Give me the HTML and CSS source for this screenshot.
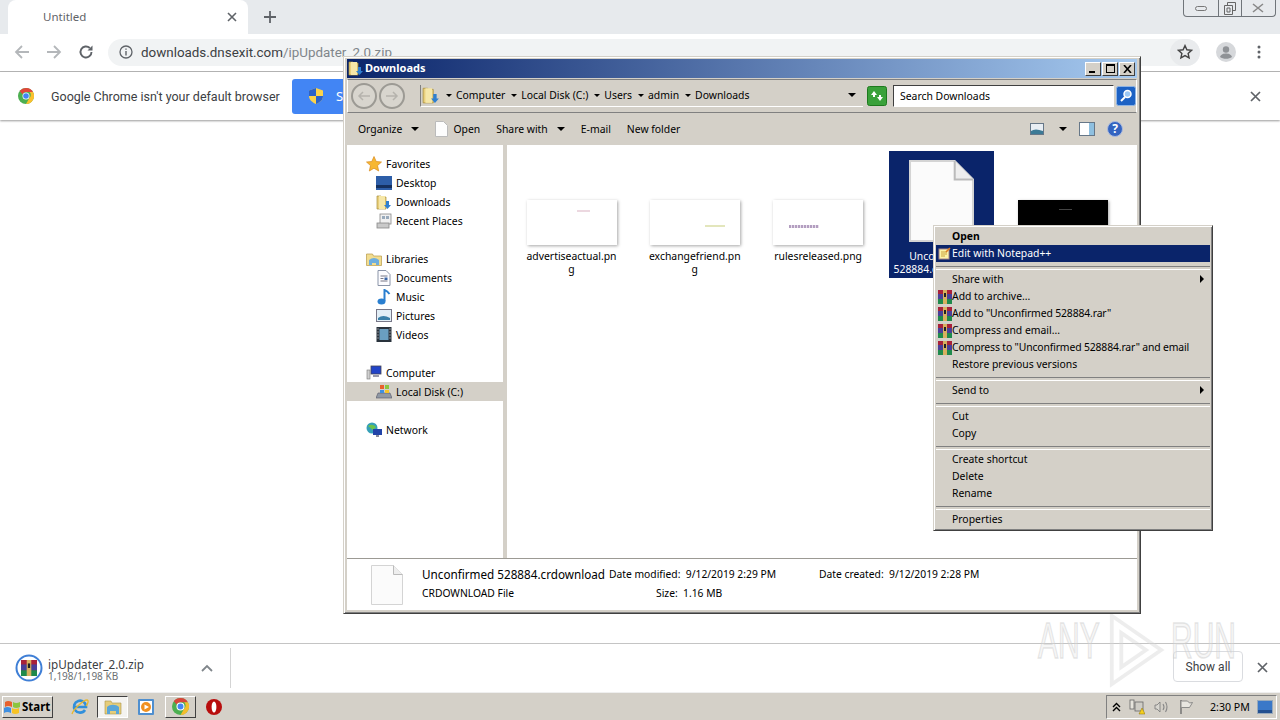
FILE: index.html
```html
<!DOCTYPE html>
<html lang="en">
<head>
    <meta charset="UTF-8">
    <title>Downloads</title>
    <link rel="stylesheet" href="styles.css">
</head>
<body>
    <svg class="defs" width="0" height="0">
        <symbol id="rar" viewBox="0 0 14 14">
            <rect width="14" height="14" fill="#7a2b6b"/>
            <rect y="0" width="14" height="4" fill="#a8213a"/>
            <rect y="4" width="14" height="5" fill="#4a3f98"/>
            <rect y="9" width="14" height="5" fill="#1f8a4c"/>
            <rect x="5" y="0" width="4" height="14" fill="#d8b060"/>
            <rect x="6" y="3" width="2" height="4" fill="#222"/>
        </symbol>
        <symbol id="folder" viewBox="0 0 16 16">
            <path d="M1 2h4l1 1h4v12H1z" fill="#e9cf7c" stroke="#a98f3e" stroke-width=".7"/>
            <path d="M3 2h6v13H3z" fill="#f6e7a8"/>
            <path d="M10 7h3v4h2l-3.500 4L8 11h2z" fill="#2f7fd0"/>
        </symbol>
        <symbol id="blankdoc" viewBox="0 0 32 40">
            <path d="M.5.5h22l9 9v30H.5z" fill="#fbfbfb" stroke="#d4d4d4"/>
            <path d="M22.500.5v9h9" fill="#eee" stroke="#bbb"/>
        </symbol>
    </svg>

    <div class="tabstrip">
        <div class="tab">
            <span class="tab-title">Untitled</span>
            <svg class="tab-close" width="10" height="10" viewBox="0 0 10 10"><path d="M1 1l8 8M9 1l-8 8" stroke="#5f6368" stroke-width="1.6"/></svg>
        </div>
        <svg class="new-tab" width="14" height="14" viewBox="0 0 14 14"><path d="M7 1v12M1 7h12" stroke="#5f6368" stroke-width="1.8"/></svg>
        <div class="win-controls">
            <span class="win-ctl"><svg width="12" height="8" viewBox="0 0 12 8"><rect x=".5" y="2.5" width="11" height="4" rx="2" fill="none" stroke="#777"/></svg></span>
            <span class="win-ctl win-ctl-mid"><svg width="12" height="13" viewBox="0 0 12 13"><path d="M3.500 3V.5h8v8H9M.5 3.500h8v9h-8zM3 6h3v4H3z" fill="none" stroke="#666"/></svg></span>
            <span class="win-ctl"><svg width="12" height="10" viewBox="0 0 12 10"><path d="M1 1l10 8M11 1L1 9" stroke="#888" stroke-width="1.6"/></svg></span>
        </div>
    </div>

    <div class="toolbar">
        <svg class="nav-btn" width="16" height="16" viewBox="0 0 16 16"><path d="M15 8H2M8 2L2 8l6 6" fill="none" stroke="#b4b7ba" stroke-width="1.8"/></svg>
        <svg class="nav-btn" width="16" height="16" viewBox="0 0 16 16"><path d="M1 8h13M8 2l6 6-6 6" fill="none" stroke="#b4b7ba" stroke-width="1.8"/></svg>
        <svg class="nav-btn" width="16" height="16" viewBox="0 0 16 16"><path d="M13.500 8A5.500 5.500 0 1 1 11.800 4" fill="none" stroke="#5f6368" stroke-width="1.9"/><path d="M14.500 1.500v5h-5z" fill="#5f6368"/></svg>
        <div class="omnibox">
            <svg width="14" height="14" viewBox="0 0 14 14"><circle cx="7" cy="7" r="6" fill="none" stroke="#5f6368" stroke-width="1.3"/><path d="M7 6v4.400M7 3.400v1.400" stroke="#5f6368" stroke-width="1.4"/></svg>
            <span class="url">downloads.dnsexit.com<span class="url-path">/ipUpdater_2.0.zip</span></span>
            <span class="star-btn"><svg width="16" height="16" viewBox="0 0 16 16"><path d="M8 1.600l1.900 4.200 4.600.5-3.400 3.100 1 4.500L8 11.600l-4.100 2.300 1-4.500-3.400-3.100 4.600-.5z" fill="none" stroke="#444" stroke-width="1.4"/></svg></span>
        </div>
        <svg class="avatar" width="20" height="20" viewBox="0 0 20 20"><circle cx="10" cy="10" r="10" fill="#d6d8db"/><circle cx="10" cy="7.500" r="3.200" fill="#8f9296"/><path d="M4 15c1-3 3.500-3.600 6-3.600s5 .6 6 3.600c-3 2.400-9 2.400-12 0z" fill="#8f9296"/></svg>
        <svg class="dots" width="4" height="14" viewBox="0 0 4 14"><circle cx="2" cy="2" r="1.500" fill="#5f6368"/><circle cx="2" cy="7" r="1.500" fill="#5f6368"/><circle cx="2" cy="12" r="1.500" fill="#5f6368"/></svg>
    </div>

    <div class="infobar">
        <svg class="chrome-logo" width="16" height="16" viewBox="0 0 16 16">
            <circle cx="8" cy="8" r="8" fill="#4caf50"/>
            <path d="M8 0a8 8 0 0 1 7 4H8a4 4 0 0 0-3.600 2.200L1.700 3A8 8 0 0 1 8 0z" fill="#e2463a"/>
            <path d="M15 4a8 8 0 0 1-7 12l3.400-6A4 4 0 0 0 11.500 4z" fill="#fbc02d"/>
            <circle cx="8" cy="8" r="3.500" fill="#fff"/><circle cx="8" cy="8" r="2.800" fill="#4285f4"/>
        </svg>
        <span class="infobar-text">Google Chrome isn't your default browser</span>
        <div class="set-default">
            <svg width="14" height="16" viewBox="0 0 14 16"><path d="M7 0l7 2.500V8c0 4-3.500 6.500-7 8-3.500-1.500-7-4-7-8V2.500z" fill="#fbd34a"/><path d="M7 0v8H0V2.500zM7 8h7c0 4-3.500 6.500-7 8z" fill="#2a62c9"/></svg>
            <span>Set as default</span>
        </div>
        <svg class="infobar-close" width="11" height="11" viewBox="0 0 11 11"><path d="M1 1l9 9M10 1l-9 9" stroke="#5f6368" stroke-width="1.700"/></svg>
    </div>

    <div class="page"></div>

    <div class="downloadbar">
        <svg class="dl-icon" width="28" height="28" viewBox="0 0 28 28">
            <circle cx="14" cy="14" r="12.500" fill="#fff" stroke="#3f7fd6" stroke-width="2"/>
            <use href="#rar" x="6" y="6" width="16" height="16"/>
        </svg>
        <div class="dl-text">
            <span class="dl-name">ipUpdater_2.0.zip</span>
            <span class="dl-size">1,198/1,198 KB</span>
        </div>
        <svg class="dl-chevron" width="12" height="8" viewBox="0 0 12 8"><path d="M1 7l5-5 5 5" fill="none" stroke="#80868b" stroke-width="1.800"/></svg>
        <div class="dl-sep"></div>
        <button class="show-all">Show all</button>
        <svg class="dl-close" width="11" height="11" viewBox="0 0 11 11"><path d="M1 1l9 9M10 1l-9 9" stroke="#5f6368" stroke-width="1.700"/></svg>
    </div>

    <div class="taskbar">
        <div class="start">
            <svg width="17" height="15" viewBox="0 0 17 15"><path d="M1 3q3-2 7 0v5q-4-2-7 0z" fill="#e8612c"/><path d="M9 3q3 2 7 0v5q-4 2-7 0z" fill="#8cc63f"/><path d="M0 9q3-2 7 0v5q-4-2-7 0z" fill="#3f8fe0"/><path d="M8 9q3 2 7 0v5q-4 2-7 0z" fill="#f7c325"/></svg>
            <span>Start</span>
        </div>
        <span class="task-icon task-ie">
            <svg width="18" height="18" viewBox="0 0 18 18"><path d="M14 12a6 6 0 1 1 1-3H4" fill="none" stroke="#2f8fdc" stroke-width="2.600"/><path d="M1 16C2 12 12 2 16 2c2 0 1 4-1 6" fill="none" stroke="#e8b830" stroke-width="1.300"/></svg>
        </span>
        <span class="task-btn task-btn-on">
            <svg width="18" height="16" viewBox="0 0 18 16"><path d="M1 2h6l1 2h9v11H1z" fill="#e6cd7a" stroke="#ad9448" stroke-width=".6"/><path d="M3 8c3-3 9-3 12 0v7h-3v-3H6v3H3z" fill="#5aa6d8"/></svg>
        </span>
        <span class="task-icon">
            <svg width="16" height="16" viewBox="0 0 16 16"><rect width="16" height="16" rx="1" fill="#4f8fcf"/><rect x="2" y="2" width="12" height="12" fill="#fff"/><circle cx="8" cy="8" r="5" fill="#f09020"/><path d="M6.500 5.500L11 8l-4.500 2.500z" fill="#fff"/></svg>
        </span>
        <span class="task-btn">
            <svg width="17" height="17" viewBox="0 0 16 16">
                <circle cx="8" cy="8" r="8" fill="#4caf50"/>
                <path d="M8 0a8 8 0 0 1 7 4H8a4 4 0 0 0-3.600 2.200L1.700 3A8 8 0 0 1 8 0z" fill="#d9453a"/>
                <path d="M15 4a8 8 0 0 1-7 12l3.400-6A4 4 0 0 0 11.500 4z" fill="#f4bd2c"/>
                <circle cx="8" cy="8" r="3.300" fill="#4285f4" stroke="#fff"/>
            </svg>
        </span>
        <span class="task-icon">
            <svg width="16" height="16" viewBox="0 0 16 16"><circle cx="8" cy="8" r="8" fill="#b80d0d"/><ellipse cx="8" cy="8" rx="2.400" ry="5.500" fill="#fff"/></svg>
        </span>
        <div class="tray">
            <svg width="9" height="10" viewBox="0 0 9 10"><path d="M1 5l3.500-3.500L8 5M1 9l3.500-3.500L8 9" fill="none" stroke="#000" stroke-width="1.400"/></svg>
            <svg class="tray-net" width="16" height="16" viewBox="0 0 16 16"><rect x="1" y="1" width="4" height="9" fill="#e6e4dc" stroke="#666" stroke-width=".8"/><rect x="6" y="3" width="8" height="9" fill="#cfcdc6" stroke="#666" stroke-width=".8"/><path d="M10 15l3-6 3 6z" fill="#f5cf1f" stroke="#8a6f00" stroke-width=".5"/></svg>
            <svg class="tray-vol" width="16" height="16" viewBox="0 0 16 16"><path d="M1 6h2l3-3v10l-3-3H1z" fill="#d8d6d0" stroke="#777" stroke-width=".8"/><path d="M9 5q2 3 0 6M11.500 3q3 5 0 10" fill="none" stroke="#888" stroke-width="1.100"/></svg>
            <svg class="tray-flag" width="15" height="16" viewBox="0 0 15 16"><path d="M2 1v14" stroke="#666" stroke-width="1.300"/><path d="M2.500 2h6l2 2 3-.5-3 5h-8" fill="#e8e6e0" stroke="#777" stroke-width=".8"/></svg>
            <span class="clock">2:30 PM</span>
            <svg class="tray-desk" width="16" height="14" viewBox="0 0 16 14"><rect x=".5" y=".5" width="15" height="13" fill="#3a78c8" stroke="#9ab"/><rect x="1" y="10" width="14" height="3" fill="#24508f"/></svg>
        </div>
    </div>

    <div class="watermark">
        <span class="wm-text">ANY</span>
        <svg class="wm-play" width="57" height="80" viewBox="0 0 60 80"><path d="M4 4l52 36L4 76zM14 22v36l26-18z" fill="none" stroke="#d6d6d6" stroke-opacity=".45" stroke-width="4"/></svg>
        <span class="wm-text wm-run">RUN</span>
    </div>

    <div class="explorer">
        <div class="ex-title">
            <svg width="16" height="16"><use href="#folder"/></svg>
            <span>Downloads</span>
            <div class="ex-title-btns">
                <span class="cap-btn"><i class="cap-min"></i></span>
                <span class="cap-btn"><i class="cap-max"></i></span>
                <span class="cap-btn"><svg width="9" height="8" viewBox="0 0 9 8"><path d="M1 0l7 8M8 0L1 8" stroke="#000" stroke-width="1.600"/></svg></span>
            </div>
        </div>

        <div class="ex-address">
            <div class="round-nav">
                <span class="round-btn"><svg width="14" height="10" viewBox="0 0 14 10"><path d="M13 5H2M6 1L2 5l4 4" fill="none" stroke="#b5b3ad" stroke-width="1.500"/></svg></span>
                <span class="round-btn"><svg width="14" height="10" viewBox="0 0 14 10"><path d="M1 5h11M8 1l4 4-4 4" fill="none" stroke="#b5b3ad" stroke-width="1.500"/></svg></span>
            </div>
            <div class="crumbs">
                <svg width="18" height="18"><use href="#folder"/></svg>
                <i class="tri-sm"></i><span>Computer</span>
                <i class="tri-sm"></i><span>Local Disk (C:)</span>
                <i class="tri-sm"></i><span>Users</span>
                <i class="tri-sm"></i><span>admin</span>
                <i class="tri-sm"></i><span>Downloads</span>
                <i class="tri crumbs-drop"></i>
            </div>
            <svg class="go-btn" width="20" height="20" viewBox="0 0 20 20"><rect x=".5" y=".5" width="19" height="19" rx="2" fill="#3aa13a" stroke="#1e7a1e"/><path d="M4 9l3-4 3 4H8v2H6V9zM16 11l-3 4-3-4h2V9h2v2z" fill="#fff"/></svg>
            <div class="search-box">Search Downloads</div>
            <svg class="search-btn" width="20" height="20" viewBox="0 0 20 20"><rect x=".5" y=".5" width="19" height="19" rx="2" fill="#1d62c4" stroke="#8fb4e4"/><circle cx="11.500" cy="8" r="3.500" fill="#9cc8f4" stroke="#fff" stroke-width="1.500"/><path d="M9 11l-4 4" stroke="#fff" stroke-width="2"/></svg>
        </div>

        <div class="ex-toolbar">
            <span class="tb-item">Organize<i class="tri"></i></span>
            <span class="tb-item tb-open">
                <svg width="13" height="16" viewBox="0 0 13 16"><path d="M.5.5h8l4 4v11H.5z" fill="#fdfdfd" stroke="#bbb"/></svg>
                Open
            </span>
            <span class="tb-item">Share with<i class="tri"></i></span>
            <span class="tb-item">E-mail</span>
            <span class="tb-item">New folder</span>
            <div class="tb-right">
                <svg width="14" height="12" viewBox="0 0 14 12"><rect x=".5" y=".5" width="13" height="11" fill="#e8eef4" stroke="#678"/><path d="M1 8q4-3 12 0v3H1z" fill="#3c7a96"/></svg>
                <i class="tri tb-view-drop"></i>
                <svg width="16" height="14" viewBox="0 0 16 14"><rect x=".5" y=".5" width="15" height="13" fill="#fff" stroke="#678"/><rect x="10" y="1" width="5" height="12" fill="#8fc0e0"/></svg>
                <svg class="tb-help" width="16" height="16" viewBox="0 0 16 16"><circle cx="8" cy="8" r="7.500" fill="#3464c0" stroke="#a9b9de"/><text x="8" y="12" class="help-mark">?</text></svg>
            </div>
        </div>

        <div class="ex-main">
            <div class="nav-pane">
                <div class="nav-row nav-top">
                    <svg width="16" height="16" viewBox="0 0 16 16"><path d="M8 .5l2.200 5 5.300.5-4 3.600 1.200 5.400L8 12.200 3.300 15l1.200-5.400-4-3.600 5.300-.5z" fill="#f7b733" stroke="#d98a1c" stroke-width=".7"/></svg>
                    Favorites
                </div>
                <div class="nav-row">
                    <svg width="16" height="14" viewBox="0 0 16 14"><rect width="16" height="14" fill="#2d5ea8"/><rect y="9" width="16" height="3" fill="#15305e"/></svg>
                    Desktop
                </div>
                <div class="nav-row">
                    <svg width="16" height="16"><use href="#folder"/></svg>
                    Downloads
                </div>
                <div class="nav-row">
                    <svg width="16" height="16" viewBox="0 0 16 16"><rect x="4" y="1" width="11" height="10" fill="#f0f0f0" stroke="#888" stroke-width=".8"/><rect x="6" y="3" width="3" height="3" fill="#9ab"/><rect x="10" y="3" width="3" height="3" fill="#9ab"/><rect x="1" y="10" width="12" height="5" fill="#c9c9c9" stroke="#888" stroke-width=".8"/></svg>
                    Recent Places
                </div>
                <div class="nav-gap"></div>
                <div class="nav-row nav-top">
                    <svg width="16" height="14" viewBox="0 0 16 14"><path d="M.5 2h6l1 2h8v9.500H.5z" fill="#f2dd90" stroke="#b79a47" stroke-width=".7"/><path d="M3 8q5-4 10 0v5h-3v-2H6v2H3z" fill="#6eaede"/></svg>
                    Libraries
                </div>
                <div class="nav-row">
                    <svg width="13" height="16" viewBox="0 0 13 16"><path d="M.5.5h8l4 4v11H.5z" fill="#fcfcff" stroke="#8a94a8"/><path d="M3 6h7M3 8.500h3M3 11h7" stroke="#667" stroke-width=".9"/><rect x="7" y="7.500" width="3" height="2.500" fill="#3a66a8"/></svg>
                    Documents
                </div>
                <div class="nav-row">
                    <svg width="15" height="16" viewBox="0 0 15 16"><ellipse cx="5" cy="12.500" rx="4" ry="3" fill="#2a7fd0"/><path d="M8 12V1q3 1 5 4" fill="none" stroke="#2a7fd0" stroke-width="2"/></svg>
                    Music
                </div>
                <div class="nav-row">
                    <svg width="16" height="13" viewBox="0 0 16 13"><rect x=".5" y=".5" width="15" height="12" fill="#e2eef6" stroke="#778"/><path d="M2 9q5-4 12 0v2H2z" fill="#3a7fa8"/></svg>
                    Pictures
                </div>
                <div class="nav-row">
                    <svg width="15" height="15" viewBox="0 0 15 15"><rect width="15" height="15" fill="#29323c"/><rect x="3" y="2" width="9" height="11" fill="#6a9ec0"/><path d="M1 2h1M1 5h1M1 8h1M1 11h1M13 2h1M13 5h1M13 8h1M13 11h1" stroke="#ddd"/></svg>
                    Videos
                </div>
                <div class="nav-gap"></div>
                <div class="nav-row nav-top">
                    <svg width="16" height="15" viewBox="0 0 16 15"><rect x="5" y="1" width="10" height="8" fill="#2244c8" stroke="#445" stroke-width=".8"/><rect x="7" y="10" width="6" height="2" fill="#99a"/><rect x="1" y="5" width="3" height="9" fill="#d0d0d0" stroke="#777" stroke-width=".6"/></svg>
                    Computer
                </div>
                <div class="nav-row nav-on">
                    <svg width="16" height="15" viewBox="0 0 16 15"><path d="M2 9h12l2 5H0z" fill="#8f98a4" stroke="#556" stroke-width=".6"/><rect x="4" y="1" width="4" height="4" fill="#e8612c"/><rect x="9" y="1" width="4" height="4" fill="#8cc63f"/><rect x="4" y="6" width="4" height="3" fill="#3f8fe0"/><rect x="9" y="6" width="4" height="3" fill="#f7c325"/></svg>
                    Local Disk (C:)
                </div>
                <div class="nav-gap"></div>
                <div class="nav-row nav-top">
                    <svg width="16" height="16" viewBox="0 0 16 16"><circle cx="6" cy="6" r="5.500" fill="#36a0b8"/><path d="M2 4q4-3 8 1l-3 3z" fill="#6cc24a"/><rect x="7" y="7" width="9" height="6" fill="#2244a8"/><rect x="10" y="13" width="3" height="2" fill="#889"/></svg>
                    Network
                </div>
            </div>

            <div class="file-pane">
                <div class="file">
                    <div class="thumb"><i class="thumb-mark mark-a"></i></div>
                    <span class="file-name">advertiseactual.pn<br>g</span>
                </div>
                <div class="file">
                    <div class="thumb"><i class="thumb-mark mark-b"></i></div>
                    <span class="file-name">exchangefriend.pn<br>g</span>
                </div>
                <div class="file">
                    <div class="thumb"><i class="thumb-mark mark-c"></i></div>
                    <span class="file-name">rulesreleased.png</span>
                </div>
                <div class="file file-on">
                    <svg class="doc-big" width="65" height="82" viewBox="0 0 32 40" preserveAspectRatio="none"><use href="#blankdoc"/></svg>
                    <span class="file-name">Unconfirmed<br>528884.crdownload</span>
                </div>
                <div class="file file-last">
                    <div class="thumb thumb-black"><i class="thumb-mark mark-d"></i></div>
                    <span class="file-name">&nbsp;</span>
                </div>
            </div>
        </div>

        <div class="ex-details">
            <svg class="details-doc" width="32" height="40"><use href="#blankdoc"/></svg>
            <div class="details-col details-name">
                <span class="details-file">Unconfirmed 528884.crdownload</span>
                <span>CRDOWNLOAD File</span>
            </div>
            <div class="details-col details-mod">
                <span>Date modified:&nbsp; 9/12/2019 2:29 PM</span>
                <span class="details-size">Size:&nbsp; 1.16 MB</span>
            </div>
            <div class="details-col details-created">
                <span>Date created:&nbsp; 9/12/2019 2:28 PM</span>
            </div>
        </div>
    </div>

    <div class="menu">
        <div class="menu-row menu-bold">Open</div>
        <div class="menu-row menu-on">
            <svg class="menu-icon" width="13" height="13" viewBox="0 0 13 13"><rect x="1" y="2" width="10" height="10" fill="#fdf3a8" stroke="#a88"/><path d="M3 5h6M3 7h6M3 9h4" stroke="#c9a23c"/><path d="M8 5l4-4" stroke="#e07b20" stroke-width="1.600"/></svg>
            Edit with Notepad++
        </div>
        <div class="menu-sep"></div>
        <div class="menu-row">Share with<i class="menu-arrow"></i></div>
        <div class="menu-row"><svg class="menu-icon" width="14" height="14"><use href="#rar"/></svg>Add to archive...</div>
        <div class="menu-row menu-tight"><svg class="menu-icon" width="14" height="14"><use href="#rar"/></svg>Add to "Unconfirmed 528884.rar"</div>
        <div class="menu-row"><svg class="menu-icon" width="14" height="14"><use href="#rar"/></svg>Compress and email...</div>
        <div class="menu-row menu-tight"><svg class="menu-icon" width="14" height="14"><use href="#rar"/></svg>Compress to "Unconfirmed 528884.rar" and email</div>
        <div class="menu-row">Restore previous versions</div>
        <div class="menu-sep"></div>
        <div class="menu-row">Send to<i class="menu-arrow"></i></div>
        <div class="menu-sep"></div>
        <div class="menu-row">Cut</div>
        <div class="menu-row">Copy</div>
        <div class="menu-sep"></div>
        <div class="menu-row">Create shortcut</div>
        <div class="menu-row">Delete</div>
        <div class="menu-row">Rename</div>
        <div class="menu-sep"></div>
        <div class="menu-row">Properties</div>
    </div>
</body>
</html>
```

FILE: styles.css
```css
* {
    margin: 0;
    padding: 0;
    box-sizing: border-box;
}

body {
    width: 1280px;
    height: 720px;
    overflow: hidden;
    display: flex;
    flex-direction: column;
    position: relative;
    background-color: white;
    font-family: "Noto Sans", sans-serif;
    font-size: 10.4px;
    white-space: nowrap;
    color: #000;
}

.defs {
    position: absolute;
}

svg {
    flex-shrink: 0;
    display: block;
}

/* chrome tab strip */
.tabstrip {
    height: 34px;
    background-color: #e7eaed;
    display: flex;
    align-items: flex-end;
    padding-left: 8px;
    position: relative;
}

.tab {
    width: 240px;
    height: 34px;
    background-color: white;
    border-radius: 8px 8px 0 0;
    display: flex;
    align-items: center;
    justify-content: space-between;
    padding: 0 11px 0 35px;
}

.tab-title {
    font-size: 11.5px;
    color: #5f6368;
    margin-bottom: 1px;
}

.new-tab {
    margin: 0 0 10px 15px;
}

.win-controls {
    position: absolute;
    top: 0;
    right: 4px;
    width: 93px;
    height: 17px;
    display: flex;
    border: 1px solid #70757a;
    border-top: none;
    border-radius: 0 0 4px 4px;
}

.win-ctl {
    flex: 1;
    display: flex;
    align-items: center;
    justify-content: center;
}

.win-ctl-mid {
    flex: 0 0 24px;
    border-left: 1px solid #70757a;
    border-right: 1px solid #70757a;
}

/* chrome toolbar */
.toolbar {
    height: 38px;
    display: flex;
    align-items: center;
    padding: 0 0 1px 14px;
    border-bottom: 1px solid #b8b8b8;
}

.nav-btn {
    margin-right: 16px;
}

.omnibox {
    margin-left: -2px;
    width: 1092px;
    height: 27px;
    background-color: #f1f3f4;
    border-radius: 14px;
    display: flex;
    align-items: center;
    padding-left: 11px;
    position: relative;
}

.url {
    margin-left: 8px;
    font-family: Roboto, sans-serif;
    font-size: 13.4px;
    color: #3c4043;
}

.url-path {
    color: #80868b;
}

.star-btn {
    margin-left: auto;
    width: 30px;
    height: 27px;
    border-radius: 14px;
    background-color: #e9ebed;
    display: flex;
    align-items: center;
    justify-content: center;
}

.avatar {
    margin-left: 16px;
}

.dots {
    margin-left: 21px;
}

/* default browser bar */
.infobar {
    height: 48px;
    display: flex;
    align-items: center;
    padding: 0 18px;
    box-shadow: 0 1px 2px rgba(0, 0, 0, 0.4);
    position: relative;
}

.infobar-text {
    margin-left: 17px;
    width: 229px;
    font-family: Roboto, sans-serif;
    font-size: 12.5px;
    color: #3c4043;
}

.set-default {
    margin-left: 12px;
    height: 35px;
    width: 200px;
    background-color: #4285f4;
    border-radius: 3px;
    color: white;
    font-size: 13px;
    display: flex;
    align-items: center;
    gap: 13px;
    padding-left: 17px;
}

.infobar-close {
    margin-left: auto;
    margin-right: 1px;
}

.page {
    flex: 1;
    background-color: white;
}

/* download shelf */
.downloadbar {
    height: 49px;
    border-top: 1px solid #c4c4c4;
    display: flex;
    align-items: center;
    padding: 0 12px 0 15px;
}

.dl-text {
    margin-left: 5px;
    padding-top: 4px;
    display: flex;
    flex-direction: column;
    width: 145px;
}

.dl-name {
    font-size: 11.7px;
    line-height: 13px;
    color: #3c4043;
}

.dl-size {
    font-size: 10px;
    line-height: 11px;
    color: #6b6f73;
}

.dl-chevron {
    margin-left: 8px;
}

.dl-sep {
    margin-left: 17px;
    width: 1px;
    height: 40px;
    background-color: #d4d4d4;
}

.show-all {
    margin-left: auto;
    margin-bottom: 3px;
    width: 70px;
    height: 31px;
    background-color: transparent;
    border: 1px solid #dadce0;
    border-radius: 4px;
    font-family: Roboto, sans-serif;
    font-size: 12px;
    color: #3c4043;
}

.dl-close {
    margin-left: 14px;
    margin-bottom: 2px;
}

/* windows taskbar */
.taskbar {
    height: 28px;
    background-color: #d4d0c8;
    border-top: 1px solid #efefef;
    display: flex;
    align-items: center;
    padding: 0 3px 0 2px;
}

.start {
    width: 51px;
    height: 22px;
    margin-right: 17px;
    display: flex;
    align-items: center;
    gap: 1px;
    padding-left: 1px;
    font-size: 11.5px;
    font-weight: bold;
    background-color: #d4d0c8;
    border: 1px solid;
    border-color: #fff #404040 #404040 #fff;
}

.task-icon {
    width: 20px;
    display: flex;
    justify-content: center;
}

.task-ie {
    margin-right: 7px;
}

.task-btn {
    width: 31px;
    height: 22px;
    margin: 0 8px 0 9px;
    display: flex;
    align-items: center;
    justify-content: center;
    border: 1px solid;
    border-color: #fff #404040 #404040 #fff;
}

.task-btn-on {
    margin: 0 8px 0 0;
    background-color: #f4f3f0;
    border-color: #404040 #fff #fff #404040;
}

.tray {
    margin-left: auto;
    width: 171px;
    height: 24px;
    display: flex;
    align-items: center;
    padding-left: 5px;
    border: 1px solid;
    border-color: #808080 #fff #fff #808080;
}

.tray-net {
    margin-left: 8px;
}

.tray-vol {
    margin-left: 9px;
}

.tray-flag {
    margin-left: 9px;
}

.clock {
    margin-left: 16px;
    font-size: 10.6px;
}

.tray-desk {
    margin-left: auto;
    margin-right: 3px;
}

/* watermark sits over the shelf */
.watermark {
    position: absolute;
    left: 1038px;
    top: 610px;
    height: 80px;
    display: flex;
    align-items: center;
    gap: 10px;
}

.wm-text {
    font-family: "Liberation Sans", sans-serif;
    font-size: 50px;
    color: rgba(225, 225, 225, 0.3);
    -webkit-text-stroke: 1.5px rgba(205, 205, 205, 0.5);
    display: inline-block;
    width: 60px;
    margin-top: -18px;
    transform: scaleX(0.6);
    transform-origin: left center;
}

.wm-run {
    margin-left: -4px;
}

/* explorer window */
.explorer {
    position: absolute;
    left: 343px;
    top: 56px;
    width: 798px;
    height: 558px;
    background-color: #d4d0c8;
    border: 1px solid;
    border-color: #d4d0c8 #404040 #404040 #d4d0c8;
    box-shadow: inset 1px 1px 0 #fff, inset -1px -1px 0 #808080;
    padding: 2px 3px 3px;
    display: flex;
    flex-direction: column;
}

.ex-title {
    height: 19px;
    flex-shrink: 0;
    background: linear-gradient(to right, #0a246a, #a6caf0);
    color: white;
    font-size: 11px;
    font-weight: bold;
    display: flex;
    align-items: center;
    gap: 1px;
    padding: 0 0 2px 1px;
}

.ex-title-btns {
    margin-left: auto;
    margin-right: 2px;
    margin-top: 2px;
    display: flex;
    gap: 1px;
}

.cap-btn {
    width: 16px;
    height: 14px;
    background-color: #d4d0c8;
    border: 1px solid;
    border-color: #fff #404040 #404040 #fff;
    display: flex;
    align-items: center;
    justify-content: center;
    position: relative;
}

.cap-min {
    width: 6px;
    height: 2px;
    background-color: #000;
    margin-top: 6px;
    margin-right: 3px;
}

.cap-max {
    width: 9px;
    height: 9px;
    border: 1px solid #000;
    border-top-width: 2px;
}

.ex-address {
    height: 34px;
    flex-shrink: 0;
    margin-top: 1px;
    border: 1px solid;
    border-color: #808080 #fff #808080 #fff;
    display: flex;
    align-items: center;
    padding: 0 0 1px 3px;
}

.round-nav {
    display: flex;
    gap: 2px;
}

.round-btn {
    width: 26px;
    height: 26px;
    border-radius: 50%;
    background-color: #d8d5ce;
    border: 2px solid #9c9a94;
    display: flex;
    align-items: center;
    justify-content: center;
}

.crumbs {
    margin-left: 15px;
    width: 443px;
    height: 22px;
    display: flex;
    align-items: center;
    gap: 4px;
    border-left: 1px solid #808080;
    border-bottom: 1px solid #fff;
    padding-left: 1px;
}

.tri-sm {
    width: 0;
    height: 0;
    margin-left: 2px;
    border-left: 3px solid transparent;
    border-right: 3px solid transparent;
    border-top: 3px solid #000;
}

.tri {
    display: inline-block;
    width: 0;
    height: 0;
    border-left: 4px solid transparent;
    border-right: 4px solid transparent;
    border-top: 4px solid #000;
}

.crumbs-drop {
    margin-left: auto;
    margin-right: 7px;
}

.go-btn {
    margin-left: 4px;
}

.search-box {
    margin-left: 6px;
    width: 221px;
    height: 22px;
    background-color: white;
    border: 1px solid;
    border-color: #404040 #fff #fff #404040;
    display: flex;
    align-items: center;
    padding-left: 6px;
}

.search-btn {
    margin-left: 2px;
}

.ex-toolbar {
    height: 32px;
    flex-shrink: 0;
    display: flex;
    align-items: center;
    padding-left: 11px;
}

.tb-item {
    display: flex;
    align-items: center;
    gap: 9px;
    margin-right: 16px;
}

.tb-open {
    gap: 5px;
}

.tb-right {
    margin-left: auto;
    margin-right: 14px;
    display: flex;
    align-items: center;
}

.tb-view-drop {
    margin: 0 12px 0 15px;
}

.tb-help {
    margin-left: 12px;
}

.help-mark {
    font-size: 12px;
    font-weight: bold;
    fill: white;
    text-anchor: middle;
}

.ex-main {
    flex: 1;
    min-height: 0;
    display: flex;
    background-color: #d4d0c8;
}

.nav-pane {
    width: 156px;
    background-color: white;
    padding-top: 9px;
}

.nav-row {
    height: 19px;
    display: flex;
    align-items: center;
    gap: 4px;
    padding-left: 29px;
}

.nav-row svg {
    width: 16px;
}

.nav-top {
    padding-left: 19px;
}

.nav-on {
    background-color: #d4d0c8;
}

.nav-gap {
    height: 19px;
}

.file-pane {
    flex: 1;
    margin-left: 4px;
    background-color: white;
    display: flex;
    align-items: flex-start;
    gap: 18.3px;
    padding: 6px 0 0 12px;
}

.file {
    width: 105px;
    height: 127px;
    display: flex;
    flex-direction: column;
    align-items: center;
    justify-content: flex-end;
    text-align: center;
}

.file-last {
    margin-left: -2px;
}

.file-name {
    height: 28px;
    margin-top: 5px;
    line-height: 13px;
}

.file-on {
    background-color: #0a246a;
    color: white;
}

.doc-big {
    margin-bottom: 3px;
}

.thumb {
    width: 90px;
    height: 45px;
    background-color: white;
    box-shadow: 1px 1px 3px rgba(0, 0, 0, 0.35);
    position: relative;
}

.thumb-black {
    background-color: #000;
}

.thumb-mark {
    position: absolute;
    height: 2px;
}

.mark-a {
    left: 50px;
    top: 10px;
    width: 13px;
    background-color: #ecd8e0;
}

.mark-b {
    left: 55px;
    top: 25px;
    width: 20px;
    background-color: #e3e6bc;
}

.mark-c {
    left: 16px;
    top: 25px;
    width: 30px;
    height: 3px;
    background: repeating-linear-gradient(to right, #b39ec0 0, #b39ec0 2px, #e8e0ec 2px, #e8e0ec 3px);
}

.mark-d {
    left: 41px;
    top: 9px;
    width: 13px;
    height: 1px;
    background-color: #444;
}

.ex-details {
    height: 52px;
    flex-shrink: 0;
    background-color: white;
    display: flex;
    align-items: center;
    position: relative;
    border-top: 1px solid #9c9a94;
    padding-left: 24px;
}

.details-doc {
    margin-right: 19px;
}

.details-col {
    display: flex;
    flex-direction: column;
    gap: 6px;
    line-height: 13px;
    align-self: flex-start;
    padding-top: 9px;
    font-size: 10.3px;
}

.details-name {
    width: 187px;
}

.details-file {
    font-size: 11.7px;
}

.details-mod {
    width: 210px;
}

.details-size {
    padding-left: 47px;
}

/* context menu */
.menu {
    position: absolute;
    left: 933px;
    top: 225px;
    width: 280px;
    height: 306px;
    padding: 1.5px 2px 0;
    background-color: #d4d0c8;
    border: 1px solid;
    border-color: #d4d0c8 #404040 #404040 #d4d0c8;
    box-shadow: inset 1px 1px 0 #fff, inset -1px -1px 0 #808080;
}

.menu-row {
    height: 17px;
    display: flex;
    align-items: center;
    padding-left: 16px;
    position: relative;
}

.menu-tight {
    letter-spacing: -0.14px;
}

.menu-icon {
    position: absolute;
    left: 2px;
    top: 2px;
}

.menu-bold {
    font-weight: bold;
}

.menu-on {
    background-color: #0a246a;
    color: white;
}

.menu-sep {
    height: 9px;
    position: relative;
}

.menu-sep::after {
    content: "";
    position: absolute;
    left: 0;
    right: 0;
    top: 4px;
    height: 2px;
    border-top: 1px solid #808080;
    border-bottom: 1px solid #fff;
}

.menu-arrow {
    position: absolute;
    right: 6px;
    top: 4px;
    border-top: 4px solid transparent;
    border-bottom: 4px solid transparent;
    border-left: 4px solid #000;
}
```
